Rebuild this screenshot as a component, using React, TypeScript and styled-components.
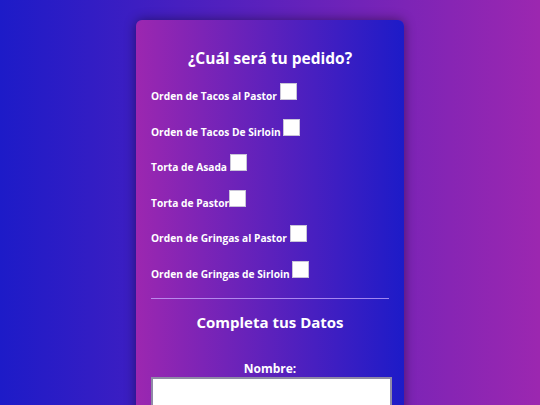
import styled, { createGlobalStyle } from "styled-components";

const GlobalStyle = createGlobalStyle`
    * {
        box-sizing: border-box;
    }
    body {
        margin: 0;
        min-height: 100vh;
        background: linear-gradient(to right, #1d1bc8, #9c27b0);
        font-family: "Open Sans", "DejaVu Sans", sans-serif;
        color: #fff;
    }
`;

const Page = styled.main`
    display: flex;
    justify-content: center;
    padding-top: 20px;
`;

const Card = styled.form`
    width: 268px;
    min-height: 420px;
    padding: 26px 15px 0;
    border-radius: 6px;
    background: linear-gradient(to right, #9c27b0, #1d1bc8);
    box-shadow: 0 0 12px rgba(0, 0, 0, 0.45);
    display: flex;
    flex-direction: column;
`;

const Title = styled.h2<{ $size: number }>`
    margin: 0;
    text-align: center;
    font-size: ${(p) => p.$size}px;
    line-height: 24px;
    font-weight: 700;
`;

const Options = styled.div`
    display: flex;
    flex-direction: column;
    gap: 11.6px;
    margin-top: 13px;
`;

const Option = styled.label`
    display: block;
    font-size: 10.2px;
    font-weight: 700;
    line-height: 21px;
`;

const Check = styled.input.attrs({ type: "checkbox" })`
    appearance: none;
    display: inline-block;
    width: 17px;
    height: 17px;
    margin: 0;
    vertical-align: baseline;
    background: #fff;
    border: 1px solid #c9c4d8;
`;

const Divider = styled.hr`
    width: 238px;
    margin: 13px 0 11px;
    border: none;
    border-top: 1px solid rgba(200, 170, 255, 0.75);
`;

const FieldLabel = styled.label`
    display: block;
    margin-top: 26px;
    text-align: center;
    font-size: 12px;
    font-weight: 700;
    line-height: 18px;
`;

const TextInput = styled.input`
    display: block;
    width: 241px;
    height: 34px;
    margin-top: -1px;
    border: 2px solid #8f8aa6;
    background: #fff;
`;

const pedidos = [
    "Orden de Tacos al Pastor ",
    "Orden de Tacos De Sirloin ",
    "Torta de Asada ",
    "Torta de Pastor",
    "Orden de Gringas al Pastor ",
    "Orden de Gringas de Sirloin ",
];

const App = () => {
    return (
        <>
            <GlobalStyle />
            <Page>
                <Card onSubmit={(e) => e.preventDefault()}>
                    <Title $size={15.5}>¿Cuál será tu pedido?</Title>
                    <Options>
                        {pedidos.map((p) => (
                            <Option key={p}>
                                {p}
                                <Check />
                            </Option>
                        ))}
                    </Options>
                    <Divider />
                    <Title $size={15}>Completa tus Datos</Title>
                    <FieldLabel htmlFor="nombre">Nombre:</FieldLabel>
                    <TextInput id="nombre" type="text" />
                </Card>
            </Page>
        </>
    );
};

export default App;
